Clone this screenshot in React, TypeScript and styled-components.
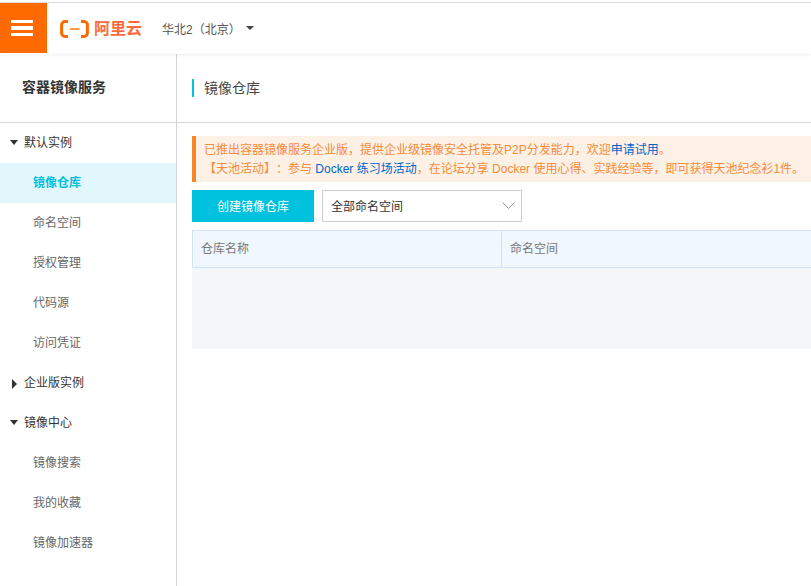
import React from "react";
import styled, { createGlobalStyle } from "styled-components";

const Global = createGlobalStyle`
  html, body { margin: 0; padding: 0; background: #fff; overflow: hidden; }
  body { font-family: "Liberation Sans", "Noto Sans CJK SC", sans-serif; font-size: 12px; color: #333; text-spacing-trim: space-all; }
  * { box-sizing: border-box; }
`;

const Page = styled.div`
  width: 811px;
  height: 586px;
  padding-top: 2px;
  display: flex;
  flex-direction: column;
  overflow: hidden;
`;

const TopBar = styled.header`
  height: 52px;
  flex: none;
  display: flex;
  align-items: center;
  border-top: 1px solid #dddddd;
  box-shadow: 0 1px 3px rgba(0, 0, 0, 0.08);
  position: relative;
  z-index: 1;
`;

const Burger = styled.div`
  width: 47px;
  height: 50px;
  margin-bottom: 1px;
  background: #ff6a00;
  display: flex;
  flex-direction: column;
  justify-content: center;
  align-items: center;
  gap: 3px;
  padding: 0 3px 0 0;
`;

const BurgerLine = styled.span`
  width: 22px;
  height: 3.5px;
  background: #fff;
`;

const Logo = styled.div`
  margin-left: 13px;
  width: 102px;
  display: flex;
  align-items: center;
  gap: 5px;
  color: #ff6a3c;
  font-size: 16px;
  font-weight: 700;
  line-height: 20px;
`;

const Region = styled.div`
  color: #555;
  font-size: 12px;
  display: flex;
  align-items: center;
`;

const Caret = styled.span`
  margin-left: 5px;
  margin-top: -2px;
  width: 0;
  height: 0;
  border-left: 4px solid transparent;
  border-right: 4px solid transparent;
  border-top: 4px solid #444;
`;

const Body = styled.div`
  flex: 1;
  display: flex;
  min-height: 0;
`;

const Sidebar = styled.aside`
  width: 177px;
  flex: none;
  border-right: 1px solid #d4d4d4;
`;

const SideTitle = styled.div`
  height: 69px;
  padding: 0 0 5px 22px;
  display: flex;
  align-items: center;
  border-bottom: 1px solid #d9d9d9;
  font-size: 14px;
  font-weight: 700;
  color: #333;
`;

const Group = styled.div`
  height: 40px;
  display: flex;
  align-items: center;
  color: #333;
  position: relative;
  padding: 0 0 3px 24px;
`;

const TriDown = styled.span`
  position: absolute;
  left: 10px;
  top: 17px;
  border-left: 4.5px solid transparent;
  border-right: 4.5px solid transparent;
  border-top: 5px solid #333;
`;

const TriRight = styled.span`
  position: absolute;
  left: 12px;
  top: 16px;
  border-top: 5px solid transparent;
  border-bottom: 5px solid transparent;
  border-left: 5px solid #333;
`;

const Item = styled.div<{ $active?: boolean }>`
  height: 40px;
  padding: 0 0 3px 33px;
  display: flex;
  align-items: center;
  color: ${(p) => (p.$active ? "#00c1de" : "#666")};
  background: ${(p) => (p.$active ? "#e2f7fb" : "transparent")};
  font-weight: ${(p) => (p.$active ? 700 : 400)};
`;

const Main = styled.main`
  flex: 1;
  min-width: 0;
  display: flex;
  flex-direction: column;
`;

const TitleBar = styled.div`
  height: 69px;
  flex: none;
  padding-left: 15px;
  display: flex;
  align-items: center;
  border-bottom: 1px solid #d9d9d9;
`;

const PageTitle = styled.div`
  height: 18px;
  margin-bottom: 1px;
  border-left: 2px solid #00c1de;
  padding-left: 10px;
  font-size: 14px;
  line-height: 18px;
  color: #444;
`;

const Content = styled.div`
  padding: 13px 0 0 15px;
  width: 634px;
`;

const Notice = styled.div`
  height: 46px;
  background: #fdf1e5;
  border-left: 4px solid #f5862a;
  padding: 5px 0 0 8px;
  color: #f78b3a;
  font-size: 12px;
  line-height: 19px;
  white-space: nowrap;
`;

const Link = styled.span`
  color: #0064c8;
`;

const Toolbar = styled.div`
  margin-top: 8px;
  display: flex;
  gap: 8px;
`;

const Primary = styled.button`
  width: 122px;
  height: 32px;
  border: 0;
  padding: 0 0 2px;
  background: #00c1de;
  color: #fff;
  font: inherit;
`;

const Select = styled.div`
  width: 200px;
  height: 32px;
  border: 1px solid #cfcfcf;
  padding: 0 6px 2px 8px;
  display: flex;
  align-items: center;
  justify-content: space-between;
  color: #333;
  font-size: 12px;
`;

const Table = styled.div`
  margin-top: 8px;
`;

const HeadRow = styled.div`
  height: 38px;
  display: flex;
  background: #f0f7ff;
  border: 1px solid #cfe2f7;
  border-right: 0;
`;

const HeadCell = styled.div<{ $w?: number }>`
  width: ${(p) => (p.$w ? `${p.$w}px` : "auto")};
  flex: ${(p) => (p.$w ? "none" : 1)};
  padding: 0 0 3px 8px;
  display: flex;
  align-items: center;
  color: #777;
  border-right: ${(p) => (p.$w ? "1px solid #cfe2f7" : "0")};
`;

const Empty = styled.div`
  height: 81px;
  background: #f5f6f8;
`;

export default function App() {
  return (
    <Page>
      <Global />
      <TopBar>
        <Burger>
          <BurgerLine />
          <BurgerLine />
          <BurgerLine />
        </Burger>
        <Logo>
          <svg width="29" height="18" viewBox="0 0 29 18" fill="none">
            <path d="M8 1.600H5A3.400 3.400 0 0 0 1.600 5V13A3.400 3.400 0 0 0 5 16.400H8" stroke="#ff6a00" strokeWidth="3" />
            <path d="M21 1.600H24A3.400 3.400 0 0 1 27.400 5V13A3.400 3.400 0 0 1 24 16.400H21" stroke="#ff6a00" strokeWidth="3" />
            <path d="M10 9H19.500" stroke="#ff6a00" strokeWidth="1.400" />
          </svg>
          <span>阿里云</span>
        </Logo>
        <Region>华北2（北京）<Caret /></Region>
      </TopBar>
      <Body>
        <Sidebar>
          <SideTitle>容器镜像服务</SideTitle>
          <Group><TriDown />默认实例</Group>
          <Item $active>镜像仓库</Item>
          <Item>命名空间</Item>
          <Item>授权管理</Item>
          <Item>代码源</Item>
          <Item>访问凭证</Item>
          <Group><TriRight />企业版实例</Group>
          <Group><TriDown />镜像中心</Group>
          <Item>镜像搜索</Item>
          <Item>我的收藏</Item>
          <Item>镜像加速器</Item>
        </Sidebar>
        <Main>
          <TitleBar><PageTitle>镜像仓库</PageTitle></TitleBar>
          <Content>
            <Notice>
              <div>已推出容器镜像服务企业版，提供企业级镜像安全托管及P2P分发能力，欢迎<Link>申请试用</Link>。</div>
              <div>【天池活动】：参与 <Link>Docker 练习场活动</Link>，在论坛分享 Docker 使用心得、实践经验等，即可获得天池纪念衫1件。</div>
            </Notice>
            <Toolbar>
              <Primary>创建镜像仓库</Primary>
              <Select>
                全部命名空间
                <svg width="13" height="7" viewBox="0 0 13 7" fill="none">
                  <path d="M0.500 0.500L6.500 6.300L12.500 0.500" stroke="#8a94a0" strokeWidth="1" />
                </svg>
              </Select>
            </Toolbar>
            <Table>
              <HeadRow>
                <HeadCell $w={309}>仓库名称</HeadCell>
                <HeadCell>命名空间</HeadCell>
              </HeadRow>
              <Empty />
            </Table>
          </Content>
        </Main>
      </Body>
    </Page>
  );
}
